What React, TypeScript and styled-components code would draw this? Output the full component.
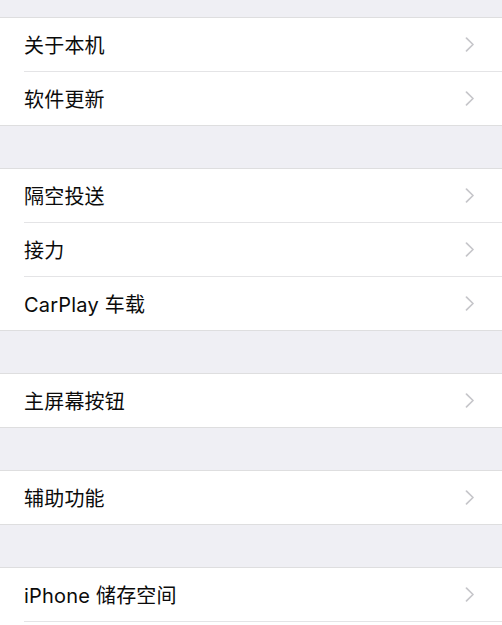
import React from 'react'
import styled, { createGlobalStyle } from 'styled-components'

const GlobalStyle = createGlobalStyle`
  html, body {
    margin: 0;
    padding: 0;
    background: #efeff4;
  }
  body {
    font-family: 'Inter', 'Noto Sans CJK SC', sans-serif;
    -webkit-font-smoothing: antialiased;
  }
`

const Page = styled.div`
  width: 502px;
  height: 625px;
  overflow: hidden;
  background: #efeff4;
  padding-top: 17px;
  box-sizing: border-box;
`

// $open: the group runs on below the bottom of the screen
const Group = styled.ul<{ $open?: boolean }>`
  list-style: none;
  margin: 0 0 42px;
  padding: 0 0 ${p => (p.$open ? '20px' : '0')};
  background: #fff;
  border-top: 1px solid #dededf;
  border-bottom: ${p => (p.$open ? 'none' : '1px solid #dededf')};
`

const Row = styled.li`
  display: flex;
  padding-left: 24px;
`

// the separator sits below the 53px cell, inset to the label's left edge
const Body = styled.div<{ $divider: boolean }>`
  flex: 1;
  height: 53px;
  display: flex;
  align-items: center;
  justify-content: space-between;
  padding-right: 27px;
  border-bottom: ${p => (p.$divider ? '1px solid #e4e4e6' : 'none')};
`

const Label = styled.span`
  font-size: 20px;
  color: #0b0b0b;
  letter-spacing: 0.2px;
`

const Chevron = () => (
  <svg width="10" height="15" viewBox="0 0 10 15" fill="none">
    <path d="M1.5 1.2 L8 7.5 L1.5 13.8" stroke="#c6c6ca" strokeWidth="1.7" strokeLinecap="round" strokeLinejoin="round" />
  </svg>
)

const groups: { items: string[]; more?: boolean }[] = [
  { items: ['关于本机', '软件更新'] },
  { items: ['隔空投送', '接力', 'CarPlay 车载'] },
  { items: ['主屏幕按钮'] },
  { items: ['辅助功能'] },
  { items: ['iPhone 储存空间'], more: true },
]

const App: React.FC = () => (
  <>
    <GlobalStyle />
    <Page>
      {groups.map((group, gi) => (
        <Group key={gi} $open={group.more}>
          {group.items.map((label, i) => (
            <Row key={label}>
              <Body $divider={i < group.items.length - 1 || !!group.more}>
                <Label>{label}</Label>
                <Chevron />
              </Body>
            </Row>
          ))}
        </Group>
      ))}
    </Page>
  </>
)

export default App
